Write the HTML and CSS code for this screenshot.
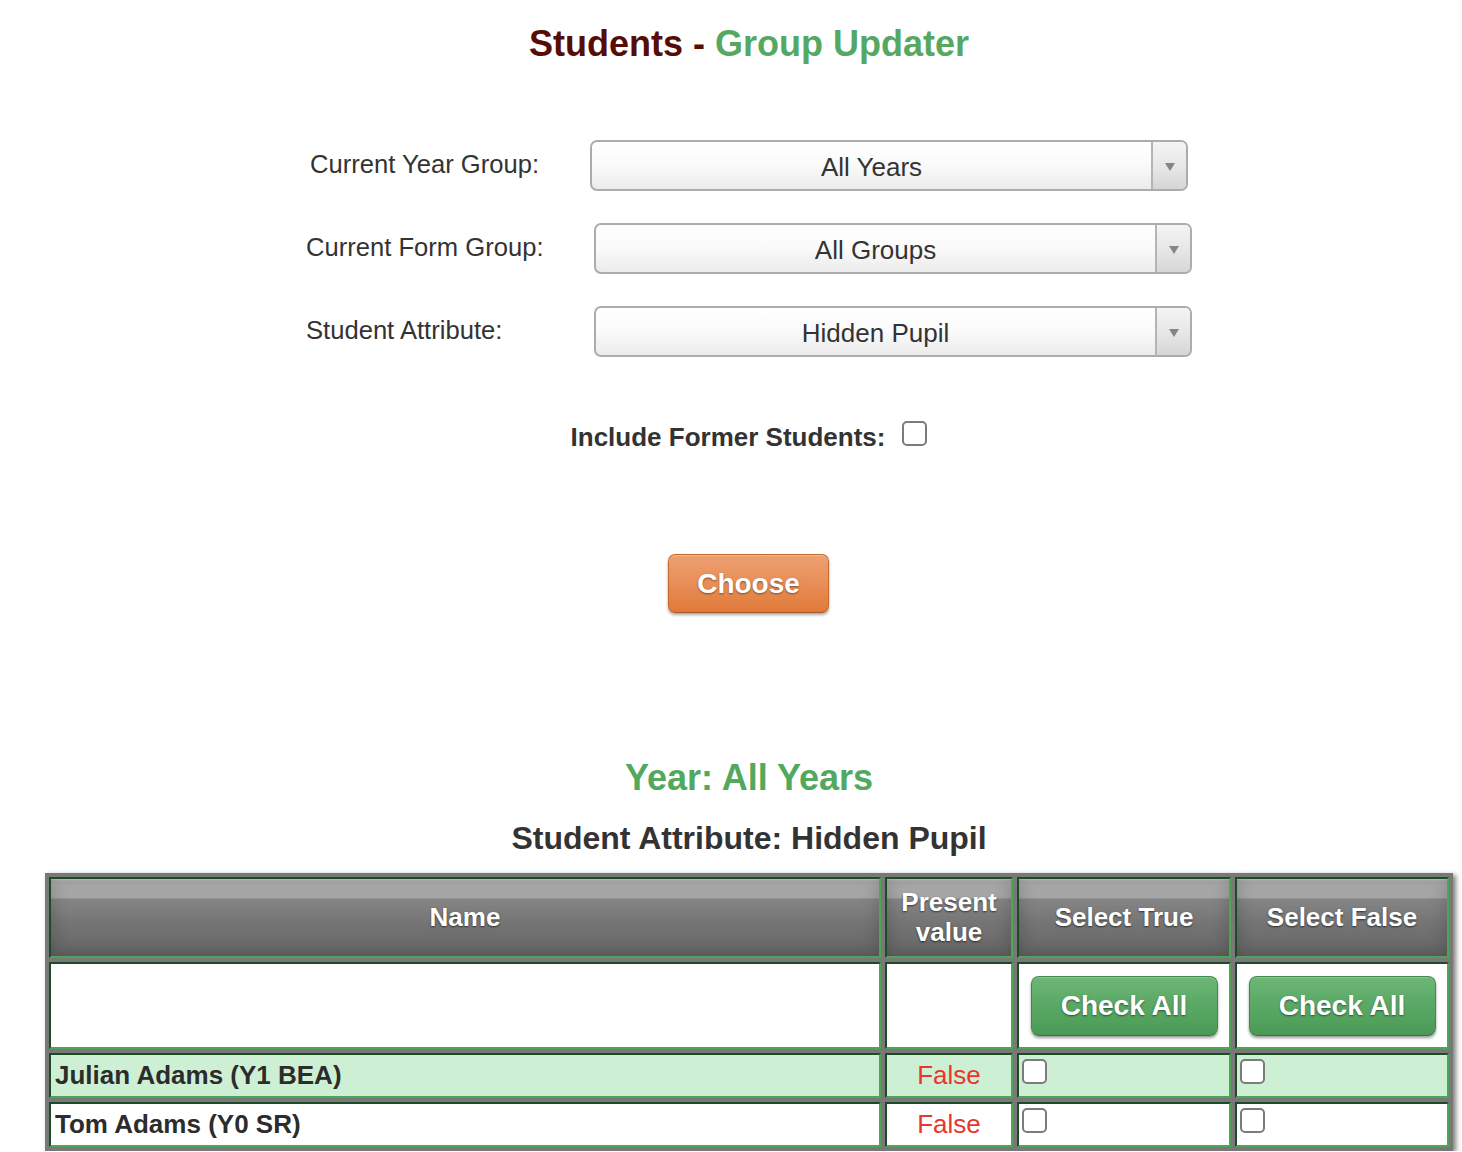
FILE: index.html
```html
<!DOCTYPE html>
<html lang="en">
<head>
<meta charset="utf-8">
<title>Students - Group Updater</title>
<link rel="stylesheet" href="styles.css">
</head>
<body>
<div class="page">
  <h1 class="title"><span class="title-main">Students - </span><span class="title-sub">Group Updater</span></h1>

  <div class="filters">
    <div class="label label-first">Current Year Group:</div>
    <div class="select select-first"><span class="select-value">All Years</span><span class="select-arrow"><span class="caret"></span></span></div>

    <div class="label">Current Form Group:</div>
    <div class="select"><span class="select-value">All Groups</span><span class="select-arrow"><span class="caret"></span></span></div>

    <div class="label">Student Attribute:</div>
    <div class="select"><span class="select-value">Hidden Pupil</span><span class="select-arrow"><span class="caret"></span></span></div>
  </div>

  <div class="include">
    <span class="include-text">Include Former Students:</span>
    <input type="checkbox" class="check">
  </div>

  <div class="actions">
    <button type="button" class="btn btn-orange">Choose</button>
  </div>

  <h2 class="year">Year: All Years</h2>
  <h3 class="attr">Student Attribute: Hidden Pupil</h3>

  <table class="grid">
    <thead>
      <tr class="head-row">
        <th class="col-name">Name</th>
        <th class="col-value">Present value</th>
        <th class="col-sel">Select True</th>
        <th class="col-sel">Select False</th>
      </tr>
    </thead>
    <tbody>
      <tr class="tool-row">
        <td></td>
        <td></td>
        <td class="tool-cell"><button type="button" class="btn btn-green">Check All</button></td>
        <td class="tool-cell"><button type="button" class="btn btn-green">Check All</button></td>
      </tr>
      <tr class="data-row data-alt">
        <td class="name">Julian Adams (Y1 BEA)</td>
        <td class="value">False</td>
        <td class="box-cell"><input type="checkbox" class="check"></td>
        <td class="box-cell"><input type="checkbox" class="check"></td>
      </tr>
      <tr class="data-row">
        <td class="name">Tom Adams (Y0 SR)</td>
        <td class="value">False</td>
        <td class="box-cell"><input type="checkbox" class="check"></td>
        <td class="box-cell"><input type="checkbox" class="check"></td>
      </tr>
    </tbody>
  </table>
</div>
</body>
</html>
```

FILE: styles.css
```css
* { box-sizing: border-box; }

html, body {
  margin: 0;
  padding: 0;
  background: #ffffff;
}

body {
  font-family: "Liberation Sans", Arial, Helvetica, sans-serif;
  color: #333333;
}

.page {
  width: 1408px;
  margin-left: 45px;
}

/* ---------- Title ---------- */
.title {
  margin: 23px 0 0;
  font-size: 36px;
  line-height: 42px;
  font-weight: bold;
  text-align: center;
}
.title-main { color: #560d06; }
.title-sub { color: #55a862; }

/* ---------- Filters ---------- */
.filters {
  display: grid;
  grid-template-columns: 288px 598px;
  grid-auto-rows: 51px;
  row-gap: 32px;
  margin: 75px 0 0 261px;
}

.label {
  align-self: center;
  margin-top: -3px;
  font-size: 25.6px;
  color: #333333;
  white-space: nowrap;
}
.label-first { padding-left: 4px; }

.select {
  display: flex;
  height: 51px;
  border: 2px solid #acacac;
  border-radius: 7px;
  background: linear-gradient(to bottom, #ffffff 0%, #fafafa 50%, #ebebeb 100%);
  overflow: hidden;
}
.select-first { margin: 0 4px 0 -4px; }

.select-value {
  flex: 1;
  display: flex;
  align-items: center;
  justify-content: center;
  padding-top: 4px;
  font-size: 26px;
  color: #333333;
}

.select-arrow {
  width: 35px;
  display: flex;
  align-items: center;
  justify-content: center;
  border-left: 2px solid #b4b4b4;
  background: linear-gradient(to bottom, #f4f4f4 0%, #e6e6e6 55%, #d6d6d6 100%);
}

.caret {
  width: 0;
  height: 0;
  margin-top: 3px;
  border-left: 5px solid transparent;
  border-right: 5px solid transparent;
  border-top: 8px solid #858585;
}

/* ---------- Include former ---------- */
.include {
  display: flex;
  align-items: center;
  justify-content: center;
  gap: 17px;
  height: 30px;
  margin-top: 63px;
}
.include-text {
  font-size: 26px;
  font-weight: bold;
  color: #333333;
  padding-top: 4px;
}
.include .check { margin: -4px 0 0 0; }

.check {
  -webkit-appearance: none;
  appearance: none;
  display: block;
  width: 25px;
  height: 25px;
  margin: 0;
  border: 2px solid #7b7b7b;
  border-radius: 5px;
  background: #ffffff;
}

/* ---------- Buttons ---------- */
.actions {
  display: flex;
  justify-content: center;
  margin-top: 104px;
}

.btn {
  font-family: "Liberation Sans", Arial, Helvetica, sans-serif;
  font-weight: bold;
  color: #ffffff;
  cursor: pointer;
  padding: 0;
}

.btn-orange {
  width: 161px;
  height: 59px;
  margin-left: -1px;
  font-size: 28px;
  border: 1px solid #c46a30;
  border-bottom-color: #a8572a;
  border-radius: 7px;
  background: linear-gradient(to bottom, #eda071 0%, #e88e57 50%, #e07a3a 100%);
  box-shadow: 0 2px 3px rgba(0, 0, 0, 0.35), inset 0 1px 0 rgba(255, 255, 255, 0.25);
  text-shadow: 0 1px 2px rgba(0, 0, 0, 0.45);
}

.btn-green {
  display: block;
  width: 187px;
  height: 60px;
  margin: 0 auto;
  font-size: 28px;
  border: 1px solid #3f8a4a;
  border-bottom-color: #33753d;
  border-radius: 8px;
  background: linear-gradient(to bottom, #6cb676 0%, #5aa865 50%, #4a9a55 100%);
  box-shadow: 0 2px 3px rgba(0, 0, 0, 0.4), inset 0 1px 0 rgba(255, 255, 255, 0.2);
  text-shadow: 0 1px 2px rgba(0, 0, 0, 0.5);
}

/* ---------- Result headings ---------- */
.year {
  margin: 145px 0 0;
  font-size: 36px;
  line-height: 40px;
  font-weight: bold;
  color: #52a85c;
  text-align: center;
}

.attr {
  margin: 22px 0 0;
  font-size: 32px;
  line-height: 36px;
  font-weight: bold;
  color: #333333;
  text-align: center;
}

/* ---------- Table ---------- */
.grid {
  width: 1408px;
  margin-top: 17px;
  table-layout: fixed;
  border-collapse: separate;
  border-spacing: 4px;
  background: #787878;
  box-shadow: 3px 2px 5px rgba(0, 0, 0, 0.5);
}

.grid th,
.grid td {
  border-style: solid;
  border-width: 2px;
  border-top-color: #1e4a25;
  border-left-color: #1e4a25;
  border-bottom-color: #4ca656;
  border-right-color: #4ca656;
  padding: 0;
}

.col-name { width: 832px; }
.col-value { width: 128px; }
.col-sel { width: 214px; }

.head-row { height: 81px; }

.grid th {
  font-size: 26px;
  line-height: 30px;
  font-weight: bold;
  color: #ffffff;
  text-align: center;
  vertical-align: middle;
  padding: 0 6px 2px;
  text-shadow: 0 1px 2px rgba(0, 0, 0, 0.6);
  background: linear-gradient(to bottom,
    #cfcfcf 0px, #b0b0b0 2px, #a4a4a4 19px,
    #858585 20px, #747474 45px, #656565 100%);
  box-shadow: inset 0 0 18px rgba(0, 0, 0, 0.22);
}

.tool-row { height: 87px; }
.tool-row td { background: #ffffff; vertical-align: middle; }

.data-row { height: 45px; }
.data-row td { background: #ffffff; }
.data-alt td { background: #cdf0d4; }

.name {
  padding-left: 4px !important;
  font-size: 26px;
  font-weight: bold;
  color: #2c2c2c;
  vertical-align: middle;
  white-space: nowrap;
}

.value {
  font-size: 26px;
  color: #e8362c;
  text-align: center;
  vertical-align: middle;
}

.box-cell { vertical-align: top; }
.box-cell .check { margin: 4px 0 0 3px; }
```
